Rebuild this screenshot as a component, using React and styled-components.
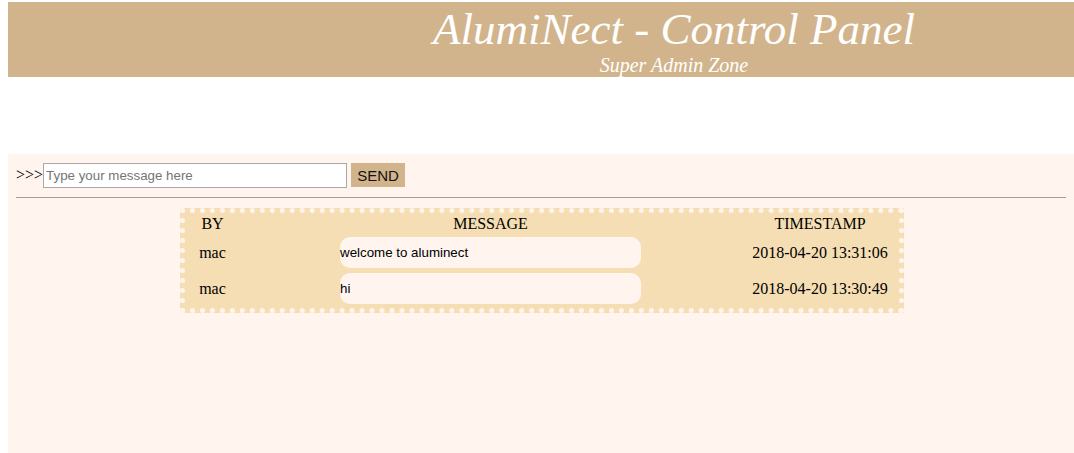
import styled, { createGlobalStyle } from 'styled-components'

const GlobalStyle = createGlobalStyle`
    html, body {
        margin: 0;
        background: #ffffff;
        font-family: "Liberation Serif", "Times New Roman", serif;
        overflow: hidden;
    }
    body {
        padding: 2px 0 0 8px;
    }
`

const Header = styled.header`
    background-color: #d2b48c;
    height: 75px;
    padding-left: 266px;
    text-align: center;
    color: white;
    font-style: italic;
    box-sizing: border-box;
`

const Title = styled.h1`
    margin: 0;
    padding-top: 3px;
    font-size: 45px;
    font-weight: normal;
    line-height: 48px;
`

const Subtitle = styled.div`
    font-size: 20px;
    line-height: 24px;
`

const Panel = styled.section`
    margin-top: 77px;
    background-color: #fff5ee;
    height: 300px;
    padding: 8px 8px 0;
`

const SendRow = styled.form`
    display: flex;
    align-items: center;
    height: 26px;
    margin-bottom: 9px;
    font-size: 16px;
`

const MessageInput = styled.input`
    width: 304px;
    height: 25px;
    box-sizing: border-box;
    border: 1px solid #a9a9a9;
    padding: 0 2px;
    font-family: "Liberation Sans", Arial, sans-serif;
    font-size: 13.33px;
    &::placeholder {
        color: #757575;
    }
`

const SendButton = styled.button`
    margin-left: 4px;
    height: 24px;
    width: 54px;
    border: none;
    background-color: #d2b48c;
    font-family: "Liberation Sans", Arial, sans-serif;
    font-size: 15px;
    color: #111;
    padding: 0;
`

const Rule = styled.hr`
    margin: 0 0 10px;
    border: none;
    border-top: 1px solid #a0a0a0;
`

const Board = styled.div`
    width: 724px;
    margin: 0 0 0 164px;
    box-sizing: border-box;
    border: 5px dotted #fff5ee;
    background-color: #f5deb3;
    padding-bottom: 4px;
    display: grid;
    grid-template-columns: 55px 301px 158px;
    justify-content: space-between;
    grid-template-rows: 19px;
    grid-auto-rows: 31px;
    row-gap: 5px;
`

const HeadCell = styled.div`
    display: flex;
    align-items: center;
    justify-content: center;
    padding-top: 3px;
    font-size: 16px;
`

const Cell = styled.div`
    display: flex;
    align-items: center;
    justify-content: center;
    font-size: 16px;
`

const Bubble = styled.div`
    display: flex;
    align-items: center;
    background-color: #fff5ee;
    border-radius: 10px;
    font-family: "Liberation Sans", Arial, sans-serif;
    font-size: 13.33px;
`

const messages = [
    { by: 'mac', text: 'welcome to aluminect', time: '2018-04-20 13:31:06' },
    { by: 'mac', text: 'hi', time: '2018-04-20 13:30:49' },
]

export default function App() {
    return (
        <>
            <GlobalStyle />
            <Header>
                <Title>AlumiNect - Control Panel</Title>
                <Subtitle>Super Admin Zone</Subtitle>
            </Header>
            <Panel>
                <SendRow onSubmit={(e) => e.preventDefault()}>
                    &gt;&gt;&gt;
                    <MessageInput type="text" placeholder="Type your message here" />
                    <SendButton type="submit">SEND</SendButton>
                </SendRow>
                <Rule />
                <Board>
                    <HeadCell>BY</HeadCell>
                    <HeadCell>MESSAGE</HeadCell>
                    <HeadCell>TIMESTAMP</HeadCell>
                    {messages.map((m, i) => [
                        <Cell key={`b${i}`}>{m.by}</Cell>,
                        <Bubble key={`m${i}`}>{m.text}</Bubble>,
                        <Cell key={`t${i}`}>{m.time}</Cell>,
                    ])}
                </Board>
            </Panel>
        </>
    )
}
